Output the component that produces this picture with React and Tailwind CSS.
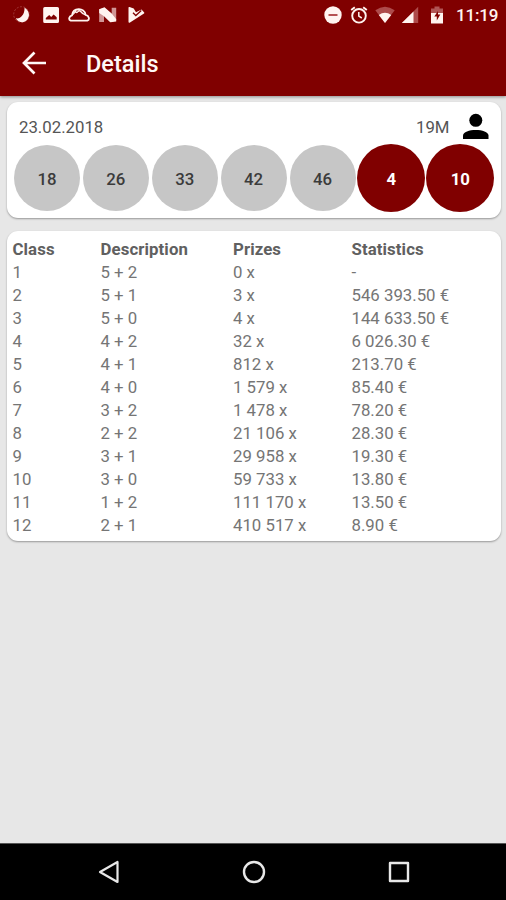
const draws = [
  { value: 18 },
  { value: 26 },
  { value: 33 },
  { value: 42 },
  { value: 46 },
  { value: 4, star: true },
  { value: 10, star: true },
];

const rows = [
  ["1", "5 + 2", "0 x", "-"],
  ["2", "5 + 1", "3 x", "546 393.50 €"],
  ["3", "5 + 0", "4 x", "144 633.50 €"],
  ["4", "4 + 2", "32 x", "6 026.30 €"],
  ["5", "4 + 1", "812 x", "213.70 €"],
  ["6", "4 + 0", "1 579 x", "85.40 €"],
  ["7", "3 + 2", "1 478 x", "78.20 €"],
  ["8", "2 + 2", "21 106 x", "28.30 €"],
  ["9", "3 + 1", "29 958 x", "19.30 €"],
  ["10", "3 + 0", "59 733 x", "13.80 €"],
  ["11", "1 + 2", "111 170 x", "13.50 €"],
  ["12", "2 + 1", "410 517 x", "8.90 €"],
];

function StatusBar() {
  return (
    <div className="flex h-[30px] items-center justify-between pr-2 pl-3 text-[#fff4f0]">
      <div className="flex items-center gap-[8.500px]">
        <svg className="size-5" viewBox="0 0 20 20" fill="none">
          <circle cx="9.500" cy="9.500" r="7.800" stroke="#a23c3c" strokeWidth="1" strokeDasharray="2 1.5" />
          <path d="M12.500 2.500C20.500 7.500 16.500 17.300 10.500 17.300C7.500 17.300 5.200 15.800 3.800 13.300C8.500 14.300 13 9.500 12.500 2.500Z" fill="currentColor" />
        </svg>
        <svg className="size-5" viewBox="0 0 20 20">
          <path fill="currentColor" fillRule="evenodd" d="M3.800 2h12.600q1.600 0 1.600 1.600v12.800q0 1.600-1.600 1.600H3.800q-1.600 0-1.600-1.600V3.600Q2.200 2 3.800 2ZM4.800 14.500h10.900v-2.300l-3.100-2.800-2.400 2.500-2-2-3.400 3Z" />
        </svg>
        <svg className="-ml-px h-5 w-[22px]" viewBox="0 0 22 20" fill="none" stroke="currentColor" strokeLinejoin="round">
          <path strokeWidth="1.800" d="M2.800 15.700C.2 14.800.9 11.300 4 10.300 5 2.400 16.400 2.200 17.600 9.800c3.700.8 4.300 5 1.700 5.900Z" />
          <path strokeWidth="1.300" d="M4.200 10c1.300-1 2.300-2 3.300-3.500 1 1.300 1.600 1.400 2.500 0 .9-1 1.800-1 2.700 0 1.300 1.800 2.500 2.800 4.800 3.300" />
        </svg>
        <svg className="-ml-px size-5" viewBox="0 0 20 20">
          <path fill="#d09595" d="M1.200 4.300 6 3v14H1.200Zm12.500-1.500h4.500v12.400l-4.500 2Z" />
          <path fill="currentColor" d="M1.200 4.300 6.500 2.200l7.200 6.300 4.500 5.700v2.300l-6 .8L6 11.300 1.200 8Z" />
        </svg>
        <svg className="size-5" viewBox="0 0 20 20">
          <path fill="currentColor" d="M2.500 2.700q0-1.100 1-.7L7.700 3.500 10 7.200 15.500 4.500 18 7.300q.8.600 0 1.300L4 17.500q-1.500.6-1.500-.7Z" />
          <path d="m7 7.800 2.800 2.700 5.500-5" fill="none" stroke="#800000" strokeWidth="1.300" />
        </svg>
      </div>
      <div className="flex items-center">
        <svg className="mr-[8px] size-[18px]" viewBox="0 0 18 18">
          <circle cx="9" cy="9" r="8.700" fill="currentColor" />
          <path d="M4.500 9h9" stroke="#b55252" strokeWidth="2" />
        </svg>
        <svg className="mr-[7px] size-[18px]" viewBox="0 0 18 18" fill="none" stroke="currentColor">
          <circle cx="9" cy="9.800" r="6.800" strokeWidth="1.900" />
          <path strokeWidth="1.900" d="M1.200 4 4.800 1.200M16.800 4l-3.600-2.800" />
          <path strokeWidth="1.500" d="M8.800 6v4.200l3 1.800" />
        </svg>
        <svg className="mr-[6px] h-[18px] w-5" viewBox="0 0 20 18">
          <path fill="#ad4b4b" d="M.3 4.300Q10-3 19.700 4.300L10 17Z" />
          <path fill="currentColor" d="M3.800 9q6.200-4.500 12.400 0L10 17Z" />
        </svg>
        <svg className="mr-[11px] size-[18px]" viewBox="0 0 18 18">
          <path fill="#ad4b4b" d="M17.200.8V17H.8Z" />
          <path fill="currentColor" d="M12.500 5.400V17H.8Z" />
        </svg>
        <svg className="mr-[12px] h-[18px] w-[14px]" viewBox="0 0 14 18">
          <path fill="#b05555" d="M4.500.5h5v2H13V7H1V2.500h3.500Z" />
          <path fill="currentColor" d="M1 7h12v10.500H1Z" />
          <path fill="#800000" d="M8 5 4.300 10.500h2.500V14.500l3.500-6H8Z" />
        </svg>
        <span className="w-[42px] pt-px text-[17px] leading-none font-medium tracking-[-0.200px] whitespace-nowrap">11:19</span>
      </div>
    </div>
  );
}

function DrawCard() {
  return (
    <section className="h-[116px] rounded-[11px] bg-white px-[5.500px] shadow-[0_1px_2px_rgba(0,0,0,0.35)]">
      <div className="flex h-[42px] items-center pt-2 pr-[3px] pl-[6.500px] text-[#555]">
        <span className="pt-px">23.02.2018</span>
        <span className="ml-auto pt-px">19M</span>
        <svg className="ml-[9px] h-[34px] w-[34px]" viewBox="0 0 34 34">
          <circle cx="16.800" cy="10.300" r="6.500" fill="#000" />
          <path fill="#000" d="M4 29V25.500c0-7.500 25.500-7.500 25.500 0V29Z" />
        </svg>
      </div>
      <div className="flex h-[68px] items-center">
        {draws.map(({ value, star }) => (
          <div key={value} className="flex w-[68.900px] shrink-0 justify-center">
            <div
              className={
                star
                  ? "flex size-[68px] items-center justify-center rounded-full bg-[#800000] pt-[3px] font-bold text-white"
                  : "flex size-[66px] items-center justify-center rounded-full bg-[#c6c6c6] pt-[3px] font-medium text-[#3b3b3b]"
              }
            >
              {value}
            </div>
          </div>
        ))}
      </div>
    </section>
  );
}

function PrizeTable() {
  return (
    <section className="mt-[13px] h-[310px] rounded-[11px] bg-white pt-[7px] pl-[5.500px] shadow-[0_1px_2px_rgba(0,0,0,0.35)]">
      <div className="grid grid-cols-[88px_132.500px_118.500px_1fr] leading-[22.970px] text-[#757575]">
        {["Class", "Description", "Prizes", "Statistics"].map((title) => (
          <div key={title} className="font-bold tracking-[0.100px] text-[#606060]">
            {title}
          </div>
        ))}
        {rows.flatMap((row) =>
          row.map((cell, i) => <div key={row[0] + "-" + i}>{cell}</div>)
        )}
      </div>
    </section>
  );
}

export default function App() {
  return (
    <div className="flex h-[900px] w-[506px] flex-col overflow-hidden bg-[#e7e7e7] font-[Roboto,sans-serif] text-[16.800px]">
      <header className="h-[96px] shrink-0 bg-[#800000] shadow-[0_1px_3px_rgba(0,0,0,0.4)]">
        <StatusBar />
        <div className="flex h-[66px] items-center text-[#fff8f6]">
          <svg className="ml-5 size-7" viewBox="0 0 28 28" fill="none" stroke="currentColor" strokeWidth="2.700">
            <path d="M26 14H4.500M14.500 3.500 4 14l10.500 10.500" />
          </svg>
          <h1 className="ml-[38px] pt-[3px] text-[23.500px] font-medium">Details</h1>
        </div>
      </header>
      <main className="flex-1 pt-[6px] pr-[5px] pl-[7px]">
        <DrawCard />
        <PrizeTable />
      </main>
      <nav className="flex h-[57px] shrink-0 items-center border-t border-[#555] bg-black">
        <svg className="ml-[97px] size-6" viewBox="0 0 24 24" fill="none" stroke="#e8e8e8" strokeWidth="2.200" strokeLinejoin="round">
          <path d="M20.500 2v20L3 12Z" />
        </svg>
        <svg className="ml-[120.500px] size-6" viewBox="0 0 24 24" fill="none" stroke="#e8e8e8" strokeWidth="2.400">
          <circle cx="12" cy="12" r="10" />
        </svg>
        <svg className="ml-[121.500px] size-6" viewBox="0 0 24 24" fill="none" stroke="#e8e8e8" strokeWidth="2.400" strokeLinejoin="round">
          <rect x="3" y="3" width="18" height="18" />
        </svg>
      </nav>
    </div>
  );
}
